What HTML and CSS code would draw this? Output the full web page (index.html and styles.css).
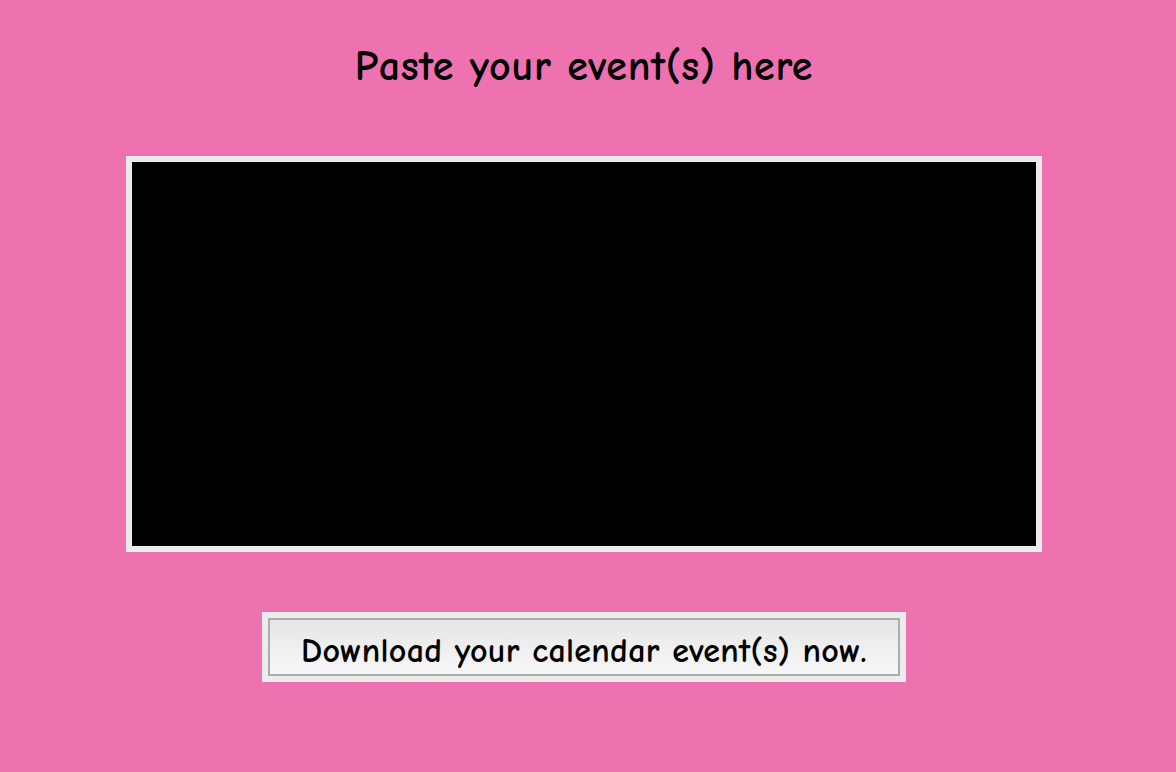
FILE: index.html
```html
<!DOCTYPE html>
<html>
<head>
<meta charset="utf-8">
<link rel="stylesheet" href="styles.css">
</head>
<body>
<main class="page">
  <h1 class="title">Paste your event(s) here</h1>
  <textarea class="events"></textarea>
  <div class="btn-frame">
    <button class="download">Download your calendar event(s) now.</button>
  </div>
</main>
</body>
</html>
```

FILE: styles.css
```css
html, body {
  margin: 0;
  padding: 0;
  background: #ee72b0;
  height: 100%;
}
.page {
  width: 1168px;
  display: flex;
  flex-direction: column;
  align-items: center;
  font-family: "Comic Sans MS", "Comic Neue", "DejaVu Sans", sans-serif;
  color: #000;
}
.title {
  margin: 40px 0 0;
  height: 54px;
  line-height: 54px;
  font-size: 42px;
  font-weight: bold;
  letter-spacing: 0.7px;
}
.events {
  display: block;
  box-sizing: border-box;
  width: 916px;
  height: 396px;
  margin-top: 62px;
  border: 6px solid #ebebeb;
  background: #000;
  color: #fff;
  resize: none;
  outline: none;
  padding: 4px;
}
.btn-frame {
  margin-top: 60px;
  padding: 6px;
  background: #ececec;
  display: flex;
}
.download {
  box-sizing: border-box;
  width: 632px;
  height: 58px;
  border: 2px solid #acacac;
  background: linear-gradient(#e6e6e6, #f7f7f7);
  font-family: inherit;
  font-size: 34px;
  font-weight: bold;
  color: #000;
  padding: 7px 0 0;
  letter-spacing: 0.3px;
}
```
